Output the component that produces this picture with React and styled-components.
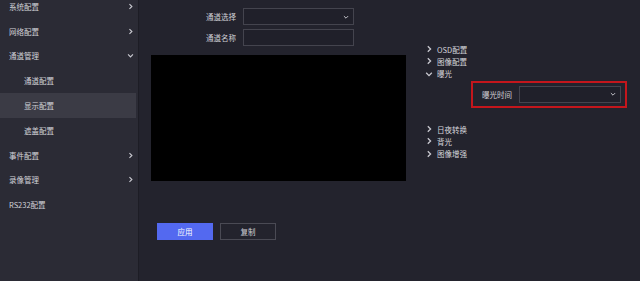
import React from "react";
import styled, { createGlobalStyle } from "styled-components";

const Global = createGlobalStyle`
  html, body { margin: 0; padding: 0; background: #23232d; }
  body { font-family: "Noto Sans CJK SC", "Liberation Sans", sans-serif; }
  * { box-sizing: border-box; }
`;

const Page = styled.div`
  display: flex;
  width: 640px;
  height: 281px;
  overflow: hidden;
  background: #23232d;
  color: #d6d6dc;
  font-size: 8px;
`;

const Sidebar = styled.nav`
  width: 139px;
  flex: none;
  background: #2b2b35;
  border-right: 1px solid #1d1d25;
  margin-top: -6px;
`;

const NavItem = styled.div`
  height: 24.8px;
  display: flex;
  align-items: center;
  justify-content: space-between;
  padding-left: ${(p) => (p.$sub ? 24 : 9)}px;
  padding-right: 4px;
  background: ${(p) => (p.$active ? "#3b3b45" : "transparent")};
  color: #d2d2d8;
  font-size: 7.5px;
  margin-right: ${(p) => (p.$active ? 2 : 0)}px;
`;

const Chev = ({ dir = "right", size = 6, color = "#c9c9d0" }) => (
  <svg width={size} height={size} viewBox="0 0 10 10" style={{ flex: "none" }}>
    {dir === "right" ? (
      <path d="M3.5 1.5 L7 5 L3.5 8.5" fill="none" stroke={color} strokeWidth="1.6" />
    ) : (
      <path d="M1.5 3.5 L5 7 L8.5 3.5" fill="none" stroke={color} strokeWidth="1.6" />
    )}
  </svg>
);

const Main = styled.div`
  flex: 1;
  display: flex;
  padding-left: 12px;
`;

const LeftCol = styled.div`
  width: 255px;
  display: flex;
  flex-direction: column;
  padding-top: 8px;
`;

const FormRow = styled.div`
  display: flex;
  align-items: center;
  gap: 7px;
  margin-bottom: 4px;
`;

const Label = styled.span`
  width: 85px;
  text-align: right;
  font-size: 7.5px;
  color: #d0d0d6;
`;

const Field = styled.div`
  width: ${(p) => p.$w}px;
  height: 17px;
  border: 1px solid #44444e;
  background: #20202a;
  display: flex;
  align-items: center;
  justify-content: flex-end;
  padding-right: 4px;
`;

const Preview = styled.div`
  margin-top: 5px;
  width: 255px;
  height: 126px;
  background: #000;
`;

const Buttons = styled.div`
  display: flex;
  gap: 7px;
  margin-top: 42px;
  padding-left: 6px;
`;

const Btn = styled.button`
  width: 56px;
  height: 17px;
  font-family: inherit;
  font-size: 7.5px;
  color: ${(p) => (p.$primary ? "#ffffff" : "#cfcfd6")};
  background: ${(p) => (p.$primary ? "#5369f0" : "transparent")};
  border: 1px solid ${(p) => (p.$primary ? "#5369f0" : "#4a4a54")};
  padding: 0;
  border-radius: 0;
`;

const RightCol = styled.div`
  flex: 1;
  padding-top: 43px;
  padding-left: 19px;
`;

const TreeItem = styled.div`
  height: 12.3px;
  display: flex;
  align-items: center;
  gap: 4px;
  font-size: 7.5px;
  color: #d6d6dc;
`;

const Exposure = styled.div`
  margin: 1px 0 15px 46px;
  width: 156px;
  height: 27px;
  border: 2px solid #c4161c;
  display: flex;
  align-items: center;
  padding-left: 9px;
  gap: 7px;
`;

const ExpLabel = styled.span`
  font-size: 7.5px;
  color: #d0d0d6;
`;

const sideItems = [
  { t: "系统配置", c: "right" },
  { t: "网络配置", c: "right" },
  { t: "通道管理", c: "down" },
  { t: "通道配置", sub: true },
  { t: "显示配置", sub: true, active: true },
  { t: "遮盖配置", sub: true },
  { t: "事件配置", c: "right" },
  { t: "录像管理", c: "right" },
  { t: "RS232配置" },
];

export default function App() {
  return (
    <>
      <Global />
      <Page>
        <Sidebar>
          {sideItems.map((it) => (
            <NavItem key={it.t} $sub={it.sub} $active={it.active}>
              <span>{it.t}</span>
              {it.c && <Chev dir={it.c} size={7} />}
            </NavItem>
          ))}
        </Sidebar>
        <Main>
          <LeftCol>
            <FormRow>
              <Label>通道选择</Label>
              <Field $w={111}>
                <Chev dir="down" size={6} />
              </Field>
            </FormRow>
            <FormRow>
              <Label>通道名称</Label>
              <Field $w={111} />
            </FormRow>
            <Preview />
            <Buttons>
              <Btn $primary>应用</Btn>
              <Btn>复制</Btn>
            </Buttons>
          </LeftCol>
          <RightCol>
            <TreeItem><Chev dir="right" size={8} />OSD配置</TreeItem>
            <TreeItem><Chev dir="right" size={8} />图像配置</TreeItem>
            <TreeItem><Chev dir="down" size={8} />曝光</TreeItem>
            <Exposure>
              <ExpLabel>曝光时间</ExpLabel>
              <Field $w={102}>
                <Chev dir="down" size={6} />
              </Field>
            </Exposure>
            <TreeItem><Chev dir="right" size={8} />日夜转换</TreeItem>
            <TreeItem><Chev dir="right" size={8} />背光</TreeItem>
            <TreeItem><Chev dir="right" size={8} />图像增强</TreeItem>
          </RightCol>
        </Main>
      </Page>
    </>
  );
}
